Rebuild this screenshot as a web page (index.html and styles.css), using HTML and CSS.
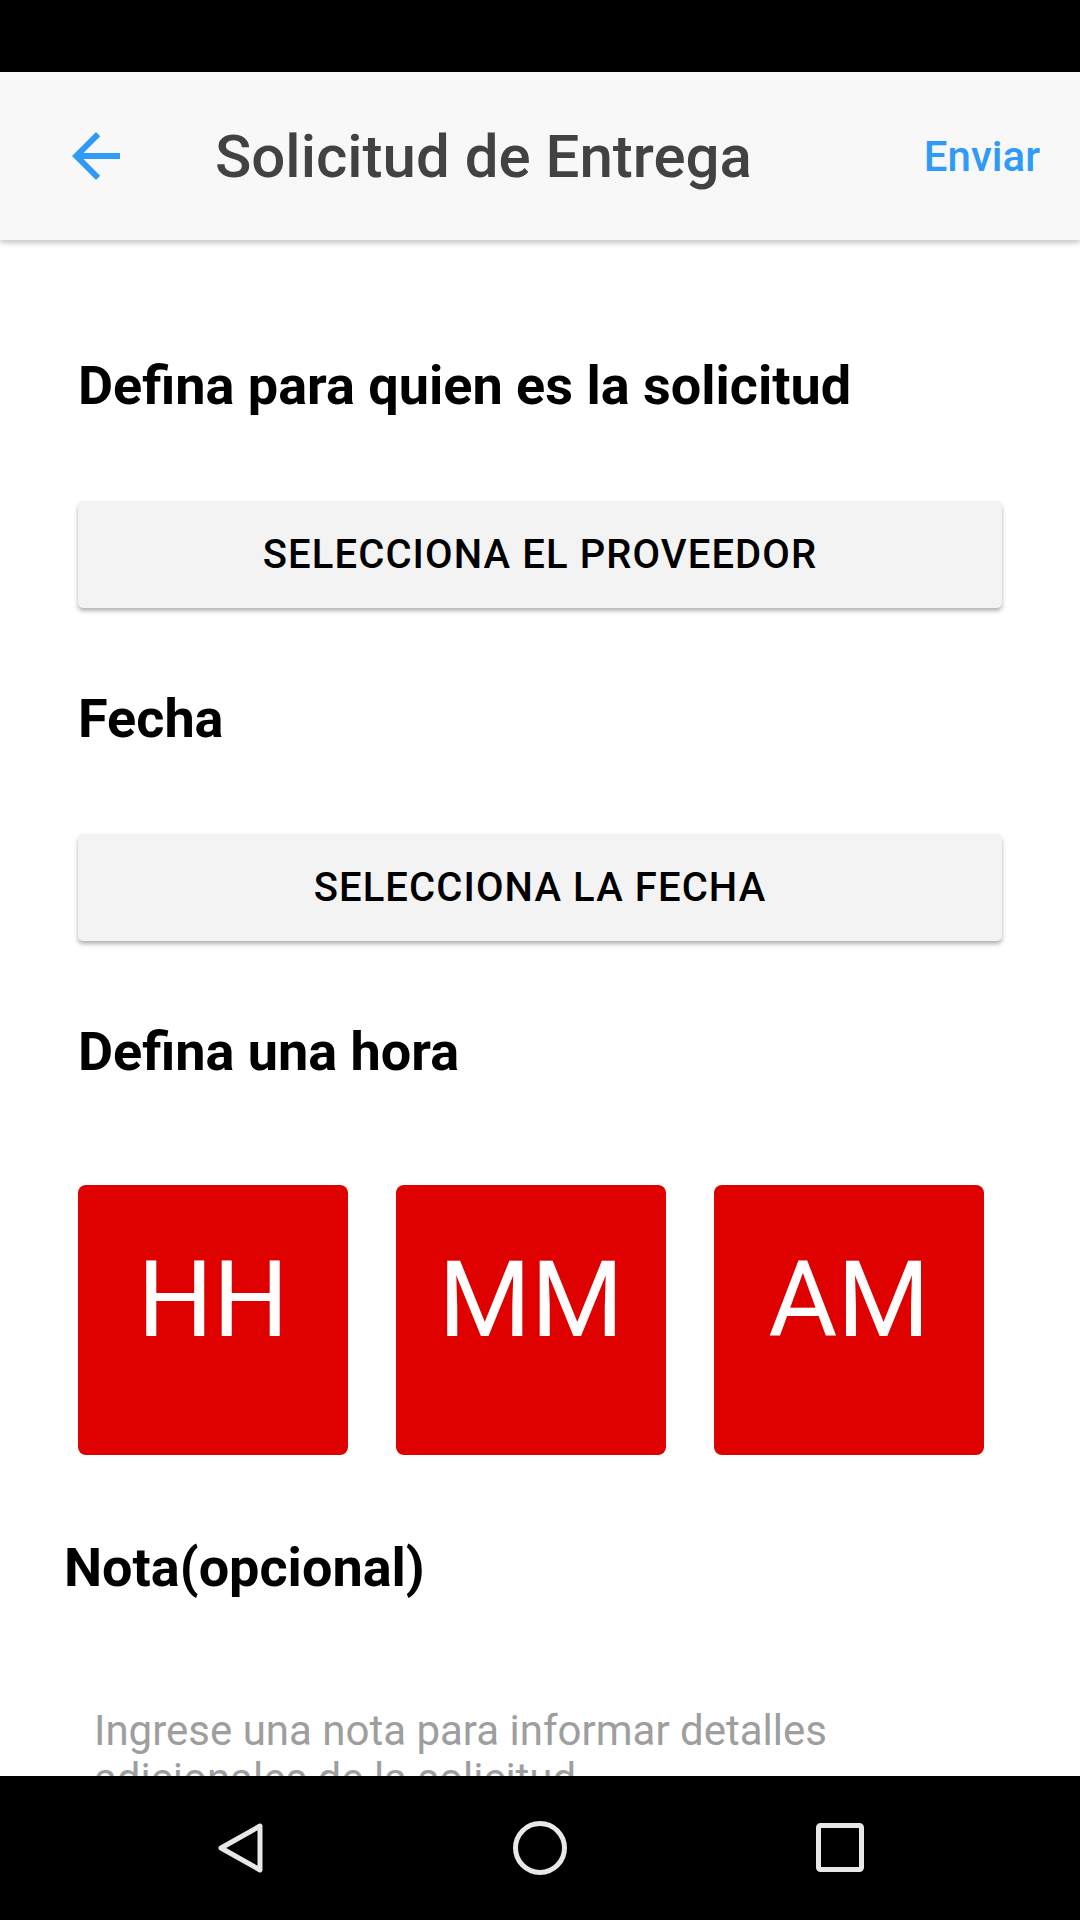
FILE: index.html
```html
<!DOCTYPE html>
<html lang="es">
<head>
<meta charset="utf-8">
<title>Solicitud de Entrega</title>
<link rel="stylesheet" href="styles.css">
</head>
<body>
<div class="screen">
  <div class="statusbar"></div>
  <header class="appbar">
    <svg class="back" viewBox="0 0 24 24" width="72" height="72" aria-hidden="true">
      <path d="M20 11H7.83l5.59-5.59L12 4l-8 8 8 8 1.41-1.41L7.83 13H20v-2z"/>
    </svg>
    <div class="title">Solicitud de Entrega</div>
    <div class="send">Enviar</div>
  </header>
  <main class="content">
    <h2 class="section-title first">Defina para quien es la solicitud</h2>
    <div class="btn">SELECCIONA EL PROVEEDOR</div>
    <h2 class="section-title">Fecha</h2>
    <div class="btn">SELECCIONA LA FECHA</div>
    <h2 class="section-title">Defina una hora</h2>
    <div class="time-row">
      <div class="time-box">HH</div>
      <div class="time-box">MM</div>
      <div class="time-box">AM</div>
    </div>
    <h2 class="section-title note-title">Nota(opcional)</h2>
    <div class="note-input">Ingrese una nota para informar detalles adicionales de la solicitud</div>
  </main>
  <nav class="navbar">
    <div class="nav-item">
      <svg viewBox="0 0 60 60" width="60" height="60" aria-hidden="true">
        <path d="M50 8 L11 30 L50 52 Z"/>
      </svg>
    </div>
    <div class="nav-item">
      <svg viewBox="0 0 60 60" width="60" height="60" aria-hidden="true">
        <circle cx="30" cy="30" r="24.5"/>
      </svg>
    </div>
    <div class="nav-item">
      <svg viewBox="0 0 60 60" width="60" height="60" aria-hidden="true">
        <rect x="8.5" y="7.5" width="43" height="44" rx="2"/>
      </svg>
    </div>
  </nav>
</div>
</body>
</html>
```
FILE: styles.css
```css
html, body {
  margin: 0;
  padding: 0;
  background: #ffffff;
}

body {
  font-family: Roboto, "Liberation Sans", Arial, sans-serif;
}

.screen {
  width: 1080px;
  height: 1920px;
  display: flex;
  flex-direction: column;
  overflow: hidden;
}

.statusbar {
  height: 72px;
  flex: 0 0 72px;
  background: #000000;
}

.appbar {
  position: relative;
  z-index: 1;
  height: 168px;
  flex: 0 0 168px;
  box-sizing: border-box;
  display: flex;
  align-items: center;
  padding: 0 40px 0 60px;
  background: #f8f8f8;
  box-shadow: 0 3px 5px rgba(0, 0, 0, 0.22);
}

.back {
  flex: 0 0 72px;
  fill: #2f9bf7;
}

.title {
  flex: 1;
  margin-left: 83px;
  font-size: 60px;
  font-weight: 500;
  color: #424242;
  white-space: nowrap;
}

.send {
  font-size: 42px;
  font-weight: 500;
  color: #2f9bf7;
}

.content {
  flex: 1;
  overflow: hidden;
  padding: 0 78px;
}

.section-title {
  margin: 79px 0 0;
  font-size: 54px;
  line-height: 64px;
  font-weight: 700;
  color: #000000;
}

.section-title.first {
  margin-top: 114px;
}

.btn {
  margin-top: 83px;
  height: 107px;
  display: flex;
  align-items: center;
  justify-content: center;
  background: #f3f3f3;
  border-radius: 5px;
  box-shadow: 0 3px 4px rgba(0, 0, 0, 0.3);
  font-size: 40px;
  font-weight: 500;
  letter-spacing: 1.1px;
  color: #000000;
}

.time-row {
  margin-top: 101px;
  display: flex;
  gap: 48px;
}

.time-box {
  width: 270px;
  height: 270px;
  box-sizing: border-box;
  padding-bottom: 40px;
  display: flex;
  align-items: center;
  justify-content: center;
  background: #df0000;
  border-radius: 8px;
  color: #ffffff;
  font-size: 106px;
  font-weight: 400;
}

.section-title.note-title {
  margin-top: 81px;
  margin-left: -14px;
}

.note-input {
  margin-top: 107px;
  padding-left: 16px;
  width: 780px;
  font-size: 42px;
  line-height: 48px;
  color: #9e9e9e;
}

.navbar {
  height: 144px;
  flex: 0 0 144px;
  box-sizing: border-box;
  padding: 0 90px;
  display: grid;
  grid-template-columns: repeat(3, 1fr);
  align-items: center;
  background: #000000;
}

.nav-item {
  display: flex;
  justify-content: center;
  align-items: center;
}

.nav-item svg {
  fill: none;
  stroke: #e8e8e8;
  stroke-width: 5;
  stroke-linejoin: round;
}
```
